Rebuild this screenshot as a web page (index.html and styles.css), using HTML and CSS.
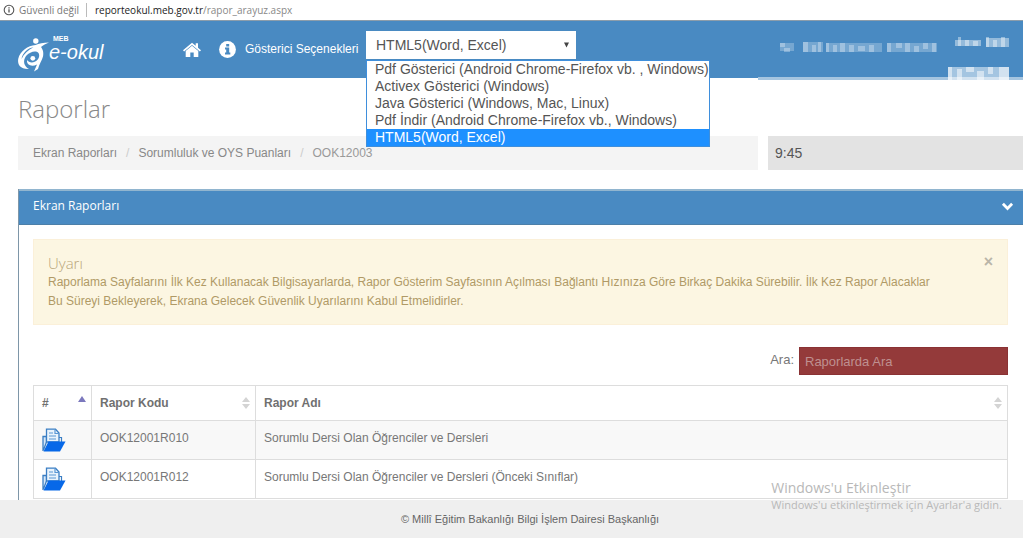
FILE: index.html
```html
<!DOCTYPE html>
<html lang="tr">
<head>
<meta charset="utf-8">
<title>Raporlar</title>
<link rel="stylesheet" href="styles.css">
</head>
<body>
<div class="address">
  <svg class="address-icon" viewBox="0 0 12 12" aria-hidden="true"><circle cx="6" cy="6" r="4.8" fill="none" stroke="#555" stroke-width="1.1"/><path d="M6 5.3v3.3M6 3.2v1.2" stroke="#555" stroke-width="1.3"/></svg>
  <span class="address-state">Güvenli değil</span>
  <span class="address-url"><b>reporteokul.meb.gov.tr</b>/rapor_arayuz.aspx</span>
</div>
<header class="topbar">
  <a class="brand" href="#" aria-label="MEB e-okul">
    <svg class="brand-mark" viewBox="0 0 32 34" aria-hidden="true">
      <circle cx="18.800" cy="3" r="2.700" fill="#fff"/>
      <path d="M32 4.500C26 4.500 22 5.500 18.500 7C11 7.500 3 13 1.200 21C.2 27 4 31.500 12 31C7 28.500 5.500 23 9 18C12 14.500 16 13 19 13.500C23 14.500 23 19 20.500 21.800C17 25.500 12 25 10 22C9.500 27.500 15 29 20 26.500L17 33.500L21 31C22 26.500 25 22.500 26 18.500C27 14 25.500 11 24 9C26 7 29 6 32 4.500Z" fill="#fff"/>
      <path d="M4.500 21C5.500 15 10.500 10 16.500 9.200C11 12 7 15.500 4.500 21Z" fill="#498ac2"/>
      <circle cx="15.800" cy="20.300" r="2.400" fill="#fff"/>
    </svg>
    <span class="brand-text"><small>MEB</small><span>e-okul</span></span>
  </a>
  <nav class="tools">
    <a href="#" aria-label="Ana sayfa"><svg class="icon-home" viewBox="0 0 18 16" aria-hidden="true"><path fill="#fff" d="M9 3.800L15.300 9.100V15.100H10.700V10.600H7.300V15.100H2.700V9.100Z"/><path fill="#fff" d="M9 .7L12.700 3.800V1.200H15V5.700L18 8.200L16.900 9.400L9 2.900L1.100 9.400L0 8.200Z"/></svg></a>
    <a href="#" aria-label="Bilgi"><svg class="icon-info" viewBox="0 0 17 17" aria-hidden="true"><circle cx="8.500" cy="8.500" r="8.400" fill="#fff"/><path fill="#498ac2" d="M7.200 3h3v2.400h-3zM6 6.600h4.200v5h1.100v1.900H6v-1.900h1.200V8.500H6z"/></svg></a>
    <label class="viewer-label" for="viewer">Gösterici Seçenekleri</label>
    <div class="viewer">
      <select id="viewer" class="viewer-select"><option>HTML5(Word, Excel)</option></select>
      <svg class="viewer-arrow" viewBox="0 0 6 6" aria-hidden="true"><path d="M0 0h6L3 6z" fill="#444"/></svg>
      <ul class="viewer-menu" role="listbox" aria-label="Gösterici Seçenekleri">
        <li role="option">Pdf Gösterici (Android Chrome-Firefox vb. , Windows)</li>
        <li role="option">Activex Gösterici (Windows)</li>
        <li role="option">Java Gösterici (Windows, Mac, Linux)</li>
        <li role="option">Pdf İndir (Android Chrome-Firefox vb., Windows)</li>
        <li role="option" aria-selected="true" class="chosen">HTML5(Word, Excel)</li>
      </ul>
    </div>
  </nav>
  <div class="account">
    <svg class="account-mask" viewBox="0 0 265 59" aria-hidden="true">
      <path fill="#498ac2" d="M0 56h265v3H0z"/>
      <g fill="#fff">
        <path opacity=".25" d="M22 22h14v8H22zM45 21h20v10H45zM68 22h56v9H68zM129 22h50v9h-50z"/>
        <path opacity=".3" d="M22 22h5v4h-5zM26 27h6v4h-6zM45 21h5v10h-5zM54 24h4v7h-4zM60 21h3v10h-3zM68 22h3v9h-3zM75 24h4v7h-4zM82 22h5v9h-5zM91 24h5v7h-5zM100 25h7v5h-7zM111 24h5v7h-5zM129 22h4v9h-4zM138 22h6v5h-6zM147 22h5v9h-5zM156 25h5v6h-5zM165 22h5v6h-5zM174 22h4v9h-4z"/>
        <path opacity=".42" d="M197 19h26v6h-26zM228 17h23v9h-23z"/>
        <path opacity=".4" d="M200 16h3v9h-3zM207 19h4v6h-4zM215 20h5v5h-5zM228 16h3v10h-3zM235 19h4v7h-4zM243 16h4v10h-4z"/>
      </g>
      <path fill="#a5c5e0" d="M0 56h265v3H0z"/>
      <g fill="#fff"><path opacity=".5" d="M190 46h61v13h-61z"/><path opacity=".5" d="M190 46h4v13h-4zM199 48h5v11h-5zM208 46h8v5h-8zM219 50h7v9h-7zM230 46h5v7h-5zM241 46h10v13h-10z"/></g>
    </svg>
  </div>
</header>
<main class="page">
  <h1 class="page-title">Raporlar</h1>
  <div class="crumb-row">
    <nav class="crumbs" aria-label="Konum"><a href="#">Ekran Raporları</a><i>/</i><a href="#">Sorumluluk ve OYS Puanları</a><i>/</i><span>OOK12003</span></nav>
    <div class="clock">9:45</div>
  </div>
  <section class="panel">
    <div class="panel-head">
      <h2>Ekran Raporları</h2>
      <button class="collapse" aria-label="Daralt"><svg viewBox="0 0 12 9" aria-hidden="true"><path d="M1.400 1.800L6 6.400L10.600 1.800" fill="none" stroke="#fff" stroke-width="2.800"/></svg></button>
    </div>
    <div class="panel-body">
      <div class="notice">
        <div>
          <h3>Uyarı</h3>
          <p>Raporlama Sayfalarını İlk Kez Kullanacak Bilgisayarlarda, Rapor Gösterim Sayfasının Açılması Bağlantı Hızınıza Göre Birkaç Dakika Sürebilir. İlk Kez Rapor Alacaklar Bu Süreyi Bekleyerek, Ekrana Gelecek Güvenlik Uyarılarını Kabul Etmelidirler.</p>
        </div>
        <button class="dismiss" aria-label="Kapat">×</button>
      </div>
      <div class="search">
        <label for="q">Ara:</label>
        <input id="q" type="text" placeholder="Raporlarda Ara">
      </div>
      <table class="reports">
        <colgroup><col class="col-icon"><col class="col-code"><col></colgroup>
        <thead>
          <tr>
            <th><div class="th">#<svg class="sort-up" viewBox="0 0 8 14" aria-hidden="true"><path d="M4 0l4 6H0z" fill="#7b78bd"/></svg></div></th>
            <th><div class="th">Rapor Kodu<svg class="sort" viewBox="0 0 8 14" aria-hidden="true"><path d="M4 1l4 5H0zM4 13l4-5H0z" fill="#d4d4d4"/></svg></div></th>
            <th><div class="th">Rapor Adı<svg class="sort" viewBox="0 0 8 14" aria-hidden="true"><path d="M4 1l4 5H0zM4 13l4-5H0z" fill="#d4d4d4"/></svg></div></th>
          </tr>
        </thead>
        <tbody>
          <tr>
            <td><a href="#" aria-label="Raporu aç"><svg class="folder" viewBox="0 0 24 24"><path d="M1 23V8.500H4.500V14L1.500 22" fill="#d5e7f8" stroke="#3a7ec4" stroke-width="1.300"/><path d="M4.500 1.200H13.500L17 5V14H4.500z" fill="#e9f3fc" stroke="#3a7ec4" stroke-width="1.300"/><path d="M13 1.500V5.500H17M7 5h4M7 8h7M7 11h7" fill="none" stroke="#5a97d4" stroke-width="1.200"/><path d="M17 9.500h2.500V14" fill="none" stroke="#3a7ec4" stroke-width="1.200"/><path d="M6.500 13.500H23.500L18 23.500H1.500Z" fill="#0768e8"/></svg></a></td>
            <td>OOK12001R010</td><td>Sorumlu Dersi Olan Öğrenciler ve Dersleri</td>
          </tr>
          <tr>
            <td><a href="#" aria-label="Raporu aç"><svg class="folder" viewBox="0 0 24 24"><path d="M1 23V8.500H4.500V14L1.500 22" fill="#d5e7f8" stroke="#3a7ec4" stroke-width="1.300"/><path d="M4.500 1.200H13.500L17 5V14H4.500z" fill="#e9f3fc" stroke="#3a7ec4" stroke-width="1.300"/><path d="M13 1.500V5.500H17M7 5h4M7 8h7M7 11h7" fill="none" stroke="#5a97d4" stroke-width="1.200"/><path d="M17 9.500h2.500V14" fill="none" stroke="#3a7ec4" stroke-width="1.200"/><path d="M6.500 13.500H23.500L18 23.500H1.500Z" fill="#0768e8"/></svg></a></td>
            <td>OOK12001R012</td><td>Sorumlu Dersi Olan Öğrenciler ve Dersleri (Önceki Sınıflar)</td>
          </tr>
        </tbody>
      </table>
    </div>
  </section>
</main>
<footer class="footer">© Millî Eğitim Bakanlığı Bilgi İşlem Dairesi Başkanlığı</footer>
<div class="activation"><strong>Windows'u Etkinleştir</strong><span>Windows'u etkinleştirmek için Ayarlar'a gidin.</span></div>
</body>
</html>
```
FILE: styles.css
```css
* { box-sizing: border-box; }
body {
  margin: 0;
  height: 100vh;
  display: flex;
  flex-direction: column;
  overflow: hidden;
  background: #fff;
  color: #777;
  font: 12px/19px "Liberation Sans", Arial, sans-serif;
}
a { color: inherit; text-decoration: none; }
h1, h2, h3, p, ul { margin: 0; padding: 0; }
button { border: 0; padding: 0; background: none; }
svg { display: block; }

.address {
  display: flex;
  align-items: center;
  flex: none;
  height: 20px;
  padding-left: 3px;
  font: 10px/14px "Open Sans", "Noto Sans", sans-serif;
  color: #888;
}
.address-icon { width: 12px; height: 12px; margin-right: 4px; }
.address-state { padding-right: 7px; border-right: 1px solid #bbb; color: #777; }
.address-url { padding-left: 8px; }
.address-url b { font-weight: 400; color: #222; }

.topbar {
  display: flex;
  flex: none;
  height: 58px;
  border-top: 1px solid #8c9dab;
  background: #498ac2;
  color: #fff;
}
.brand { display: flex; width: 164px; padding: 17px 0 0 17px; }
.brand-mark { width: 32px; height: 34px; }
.brand-text { display: flex; flex-direction: column; margin-top: -2px; font-style: italic; font-size: 20px; line-height: 20px; }
.brand-text small { padding-left: 4px; font-size: 7px; line-height: 6px; font-style: normal; font-weight: 700; }
.tools { display: flex; align-items: center; flex: 1; padding-left: 19px; }
.icon-home { width: 18px; height: 16px; }
.icon-info { width: 17px; height: 17px; margin-left: 18px; }
.viewer-label { width: 121px; margin-left: 9px; font-size: 12px; white-space: nowrap; }
.viewer { position: relative; width: 210px; height: 28px; margin-top: -9px; }
.viewer-select {
  width: 100%;
  height: 28px;
  padding: 0 10px;
  border: 0;
  border-radius: 0;
  appearance: none;
  background: #fff;
  color: #555;
  font: 14px/28px "Liberation Sans", Arial, sans-serif;
}
.viewer-arrow { position: absolute; right: 7px; top: 11px; width: 5px; height: 6px; }
.viewer-menu {
  position: absolute;
  z-index: 2;
  left: 0;
  top: 29px;
  width: max-content;
  border: 1px solid #3f8fdc;
  background: #fff;
  color: #555;
  list-style: none;
  font-size: 14px;
  line-height: 17px;
  white-space: nowrap;
}
.viewer-menu li { padding-left: 8px; }
.viewer-menu .chosen { background: #1e90ff; color: #fff; }
.account { width: 265px; }
.account-mask { width: 265px; height: 59px; }

.page { flex: 1; min-height: 0; overflow: hidden; padding-left: 18px; }
.page-title { padding: 13px 0 9px; font: 300 24px/36px "Open Sans", "Noto Sans", sans-serif; color: #888; }
.crumb-row { display: flex; gap: 10px; height: 34px; line-height: 34px; }
.crumbs { flex: 1; padding-left: 15px; background: #f4f4f4; color: #888; }
.crumbs i { padding: 0 9px; color: #ccc; font-style: normal; }
.crumbs span { color: #999; }
.clock { width: 255px; padding-left: 7px; background: #e3e3e3; color: #555; font-size: 14px; }

.panel { margin-top: 19px; border-left: 1px solid #7e96a8; }
.panel-head {
  display: flex;
  align-items: center;
  justify-content: space-between;
  height: 36px;
  padding: 0 9px 0 14px;
  border-top: 2px solid #91b5cf;
  border-bottom: 1px solid #4c7fa8;
  background: #498ac2;
}
.panel-head h2 { padding-bottom: 3px; font: 400 12px/18px "Open Sans", "Noto Sans", sans-serif; color: #fff; }
.collapse svg { width: 13px; height: 9px; margin-bottom: 3px; }
.panel-body { padding: 14px 15px 40px 14px; }
.notice {
  display: flex;
  justify-content: space-between;
  height: 86px;
  padding: 14px 14px 0;
  border: 1px solid #fbf0d9;
  background: #fcf6e2;
  color: #b09a66;
}
.notice h3 { font: 300 15px/19px "Open Sans", "Noto Sans", sans-serif; color: #b8a478; }
.notice p { max-width: 890px; }
.dismiss { align-self: flex-start; color: #b9b5a8; font: 700 16px/16px "Liberation Sans", Arial, sans-serif; }
.search { display: flex; justify-content: flex-end; gap: 5px; margin: 22px 0 10px; line-height: 26px; font-size: 13px; }
.search input {
  width: 209px;
  height: 28px;
  padding: 0 5px;
  border: 1px solid #8a3234;
  background: #943a3a;
  color: #fff;
  font: 13px "Liberation Sans", Arial, sans-serif;
}
.search input::placeholder { color: #bf9090; opacity: 1; }

.reports { width: 100%; table-layout: fixed; border-collapse: collapse; }
.col-icon { width: 58px; }
.col-code { width: 164px; }
.reports th, .reports td { height: 39px; padding: 0 8px; border: 1px solid #ddd; text-align: left; }
.reports td { padding-bottom: 3px; }
.reports td:first-child { padding-bottom: 0; }
.reports th { height: 35px; padding-right: 5px; color: #707070; }
.th { display: flex; align-items: center; justify-content: space-between; }
.sort, .sort-up { width: 8px; height: 14px; }
.reports tbody tr:first-child { background: #f8f8f8; }
.folder { width: 24px; height: 24px; }

.footer { flex: none; height: 38px; background: #efefef; color: #666; font-size: 11px; line-height: 38px; text-align: center; padding-left: 37px; }
.activation {
  position: absolute;
  right: 21px;
  bottom: 25px;
  display: flex;
  flex-direction: column;
  color: #b8b8b8;
  font: 11px/17px "Open Sans", "Noto Sans", sans-serif;
}
.activation strong { font-size: 14px; font-weight: 400; }
```
